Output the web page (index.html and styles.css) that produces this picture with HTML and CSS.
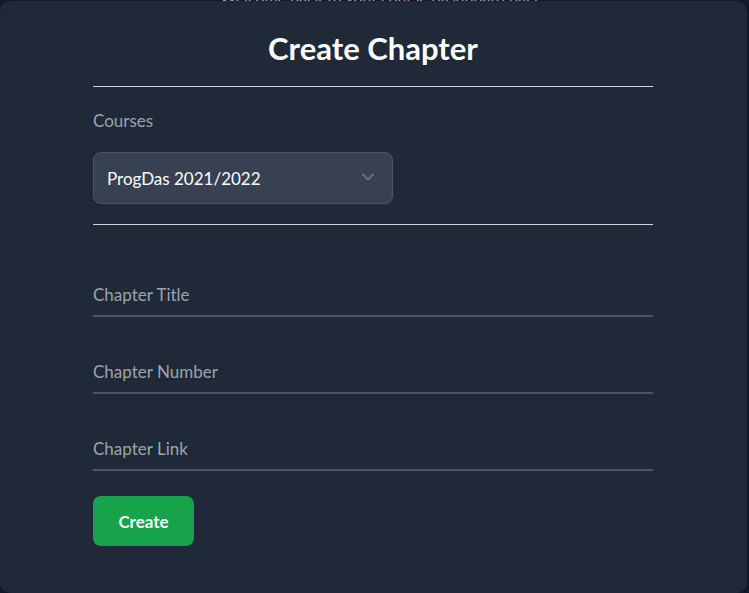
FILE: index.html
```html
<!DOCTYPE html>
<html lang="en">
<head>
<meta charset="utf-8">
<title>Create Chapter</title>
<link rel="stylesheet" href="styles.css">
</head>
<body>
<div class="behind">Welcome back to your course dashboard page</div>
<div class="modal">
  <h1 class="title">Create Chapter</h1>
  <hr class="rule">
  <div class="field-group">
    <label class="label" for="course">Courses</label>
    <div class="select">
      <span class="select-value">ProgDas 2021/2022</span>
      <svg class="chevron" width="16" height="16" viewBox="0 0 16 16" fill="none" stroke="currentColor" stroke-width="1.8" stroke-linecap="round" stroke-linejoin="round"><path d="M3 5.5l5 5 5-5"/></svg>
    </div>
  </div>
  <hr class="rule">
  <div class="inputs">
    <div class="input">Chapter Title</div>
    <div class="input">Chapter Number</div>
    <div class="input">Chapter Link</div>
  </div>
  <button class="btn">Create</button>
</div>
</body>
</html>
```
FILE: styles.css
```css
* { box-sizing: border-box; }
html, body { margin: 0; padding: 0; }
body {
  width: 749px;
  height: 593px;
  overflow: hidden;
  background: #111827;
  font-family: "Lato", "Open Sans", sans-serif;
  position: relative;
}
.behind {
  position: absolute;
  top: -13px;
  left: 220px;
  font-size: 16px;
  line-height: 19px;
  color: #9ca3af;
}
.modal {
  position: absolute;
  left: 0;
  top: 1px;
  width: 747px;
  height: 592px;
  background: #1f2937;
  border-radius: 10px;
  padding: 29px 94px 0 93px;
  display: flex;
  flex-direction: column;
}
.title {
  margin: 0;
  text-align: center;
  color: #ffffff;
  font-size: 31px;
  font-weight: 700;
  line-height: 36px;
}
.rule {
  margin: 20px 0 0;
  border: 0;
  border-top: 1px solid #d1d5db;
  height: 0;
}
.field-group {
  padding-top: 22px;
  display: flex;
  flex-direction: column;
}
.label {
  color: #9ca3af;
  font-size: 17px;
  line-height: 24px;
}
.select {
  margin-top: 19px;
  width: 300px;
  height: 52px;
  background: #374151;
  border: 1px solid #4b5563;
  border-radius: 8px;
  display: flex;
  align-items: center;
  justify-content: space-between;
  padding: 0 16px 0 13px;
  color: #ffffff;
  font-size: 17px;
}
.chevron { color: #6b7280; margin-top: -2px; }
.inputs {
  padding-top: 31px;
  display: flex;
  flex-direction: column;
  gap: 16px;
}
.input {
  height: 61px;
  border-bottom: 2px solid #4b5563;
  color: #9ca3af;
  font-size: 17px;
  display: flex;
  align-items: flex-end;
  padding-bottom: 10px;
}
.btn {
  margin-top: 25px;
  width: 101px;
  height: 50px;
  border: 0;
  border-radius: 8px;
  background: #16a34a;
  color: #ffffff;
  font-family: inherit;
  font-size: 17px;
  font-weight: 700;
}
```
